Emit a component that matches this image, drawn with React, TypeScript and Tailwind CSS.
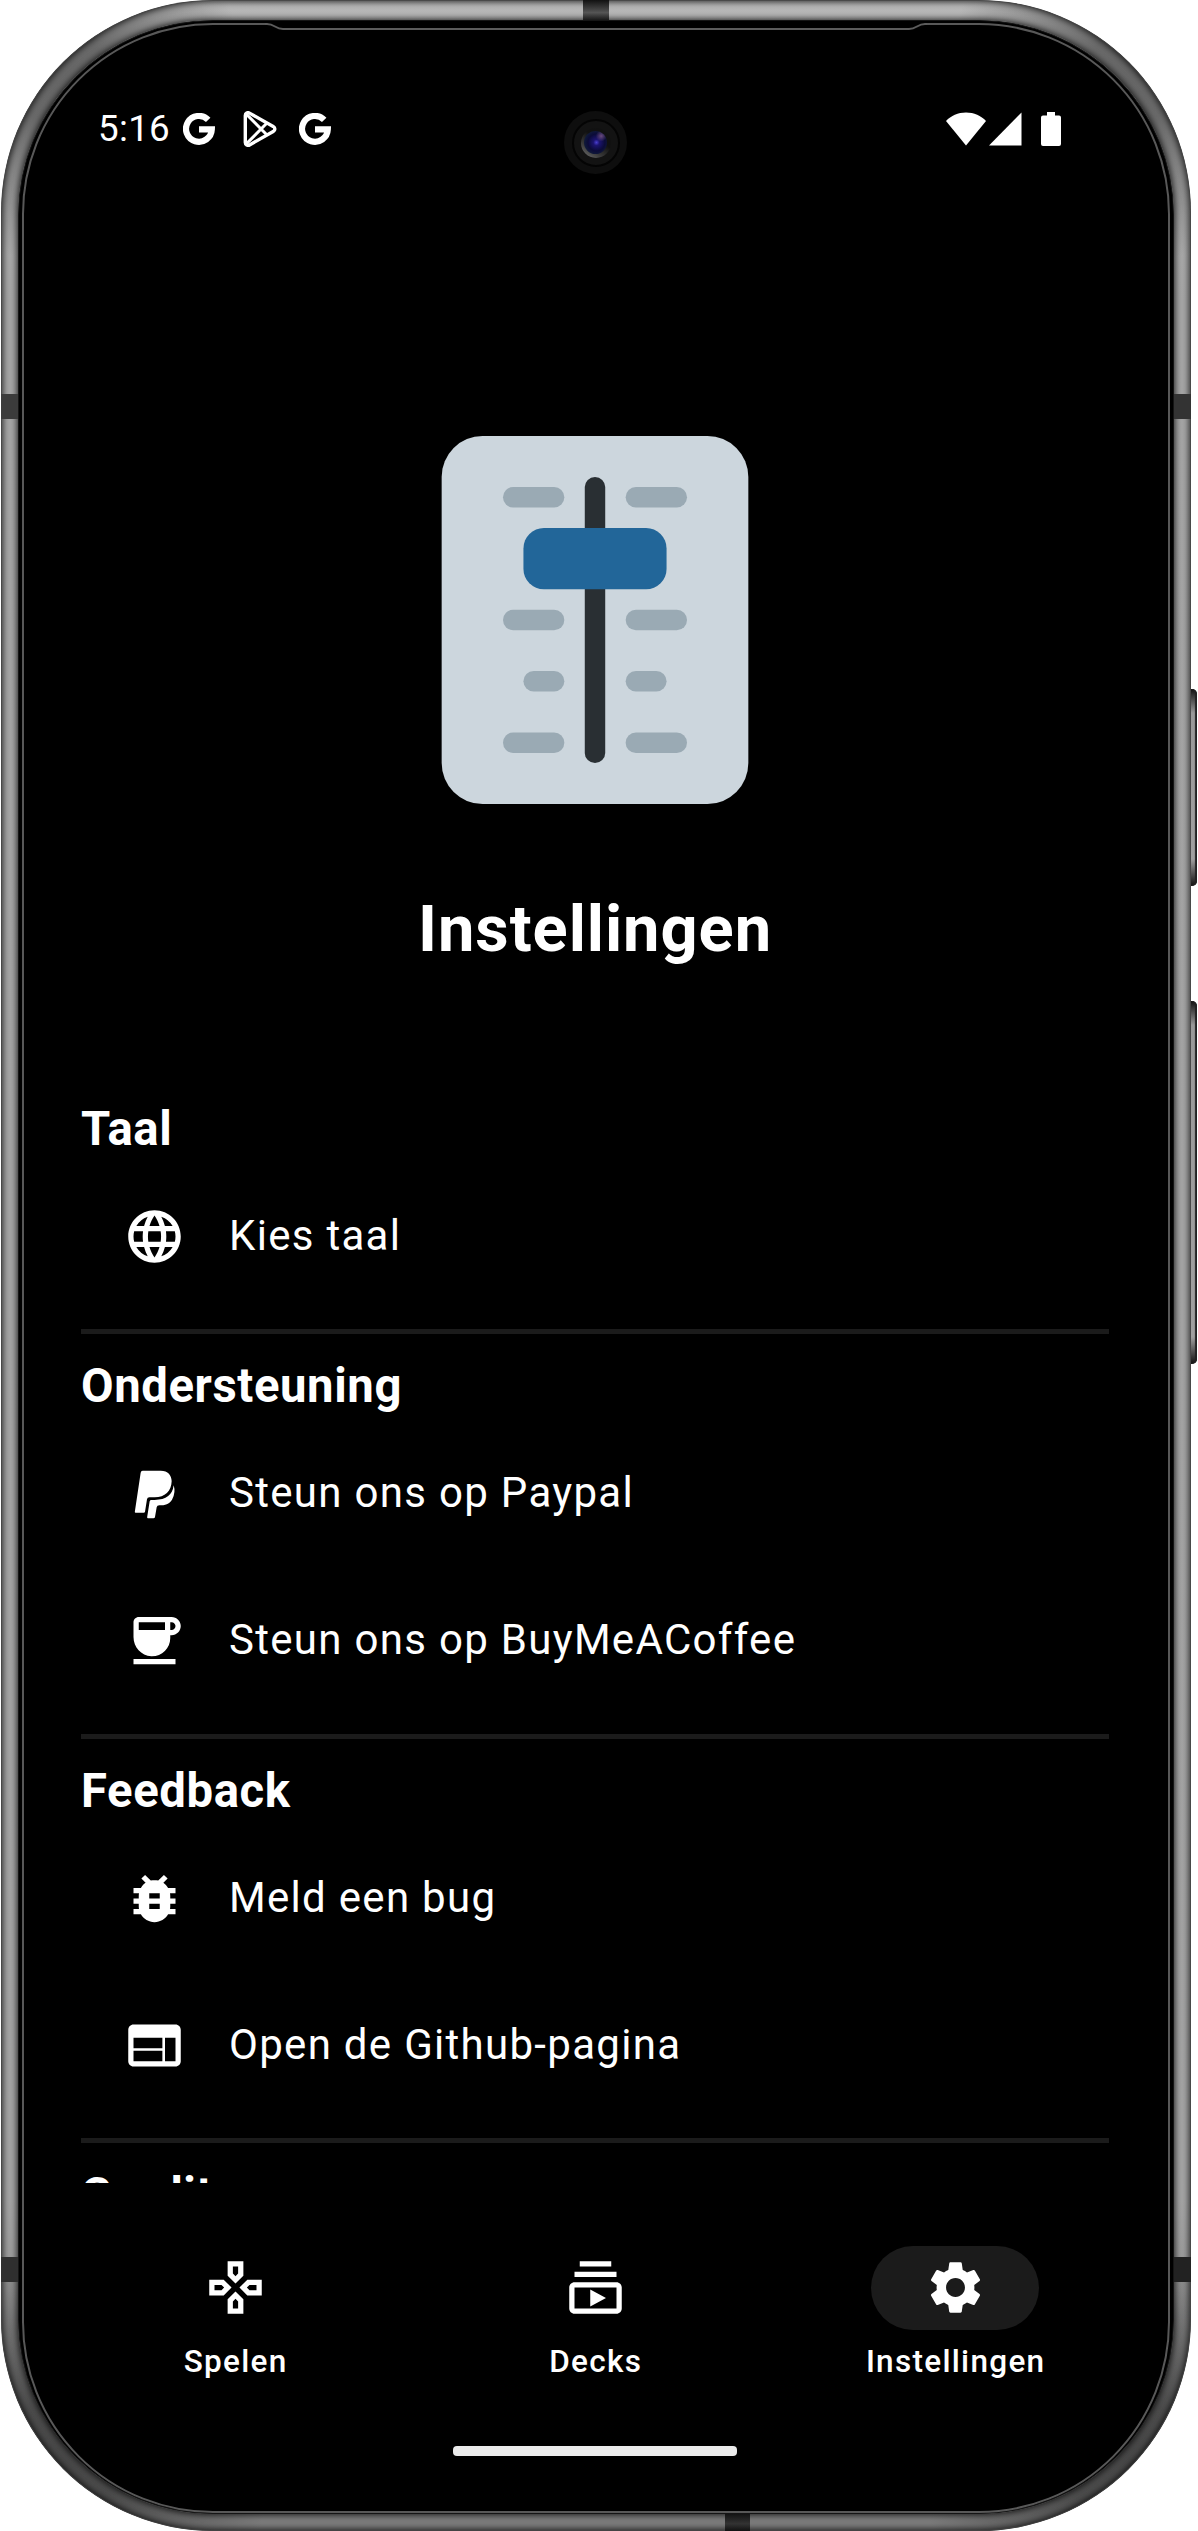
import type { ReactNode } from "react";
import type { IconType } from "react-icons";
import {
  MdBugReport,
  MdCoffee,
  MdLanguage,
  MdOutlineGamepad,
  MdOutlineSubscriptions,
  MdSettings,
  MdWeb,
} from "react-icons/md";

function Paypal({ className }: { className?: string }) {
  return (
    <svg viewBox="3 6 189 189" className={className} fill="currentColor">
      <path d="M62 32H116C138 32 149 46 149 64C148 94 129 112 98 112H82Q76 112 75 118L69 155Q68.500 158 65 158H41Q38 158 38.500 155L56 38Q57 32 62 32Z" />
      <path d="M155 76Q162 98 150 119C142 132 129 136 112 136Q105 136 104 142L99 171Q98.500 175 94 175H78Q75 175 75.500 171L83 124Q84 120 88 120H98Q150 119 155 76Z" />
    </svg>
  );
}

function GoogleG() {
  return (
    <svg viewBox="0 0 32 32" className="size-8" fill="none" stroke="white" strokeWidth="6.2">
      <path d="M25.2 6.9A12.9 12.9 0 1 0 28.8 16.4H16" />
    </svg>
  );
}

function PlayStore() {
  return (
    <svg viewBox="0 0 34 36" className="h-9 w-[34px]" fill="none" stroke="white" strokeWidth="3.4" strokeLinejoin="round">
      <path d="M2.3 4.4C2.3 2.2 4.6 1 6.5 2.1L30.2 15.4C32.4 16.7 32.4 19.3 30.2 20.6L6.500 33.900C4.6 35 2.3 33.8 2.3 31.6Z" />
      <path d="M3.6 3.4L24 24M3.6 32.6L24 12" strokeWidth="3" />
    </svg>
  );
}

function StatusBar() {
  return (
    <div className="flex h-[36px] items-center pl-[43px] pr-[74px]">
      <span className="w-[85px] text-[36.75px] leading-[36px] tracking-[0.3px]">5:16</span>
      <GoogleG />
      <span className="ml-7">
        <PlayStore />
      </span>
      <span className="ml-[22px]">
        <GoogleG />
      </span>
      <div className="ml-auto flex items-center gap-[3px]">
        <svg viewBox="0 0 40 34" className="h-[34px] w-10" fill="white">
          <path d="M20 33.5L0 9C5 4 12 .6 20 .6S35 4 40 9Z" />
        </svg>
        <svg viewBox="0 0 33 34" className="h-[34px] w-[33px]" fill="white">
          <path d="M0 33.5L32.5 .5V33.5Z" />
        </svg>
        <svg viewBox="0 0 20 34" className="ml-4 h-[34px] w-5" fill="white">
          <path d="M6 0H14V3.4H18Q20 3.4 20 5.4V32Q20 34 18 34H2Q0 34 0 32V5.4Q0 3.4 2 3.4H6Z" />
        </svg>
      </div>
    </div>
  );
}

function SliderArt() {
  const marks = [5, 17, 29];
  return (
    <svg viewBox="0 0 36 36" className="size-[368px]">
      <rect x="3" y="0" width="30" height="36" rx="4" fill="#CCD6DD" />
      <g fill="#9AAAB4">
        {marks.map((y) => (
          <g key={y}>
            <rect x="9" y={y} width="6" height="2" rx="1" />
            <rect x="21" y={y} width="6" height="2" rx="1" />
          </g>
        ))}
        <rect x="11" y="23" width="4" height="2" rx="1" />
        <rect x="21" y="23" width="4" height="2" rx="1" />
      </g>
      <rect x="17" y="4" width="2" height="28" rx="1" fill="#292F33" />
      <rect x="11" y="9" width="14" height="6" rx="2" fill="#226699" />
    </svg>
  );
}

type IconComponent = IconType | typeof Paypal;

function Row({ icon: Icon, label }: { icon: IconComponent; label: string }) {
  return (
    <div className="flex h-[147px] items-center pl-[42px]">
      <Icon className="size-[63px] shrink-0" />
      <span className="ml-[43px] pb-[2px] text-[42px] leading-[63px] tracking-[1.3px]">{label}</span>
    </div>
  );
}

function Section({ title, children }: { title: string; children?: ReactNode }) {
  return (
    <section className="border-b-[5px] border-[#1b1b1b] pb-[19.4px]">
      <h2 className="flex h-[86px] items-end pb-[6px] text-[47.25px] leading-[55px] font-bold tracking-[0.6px]">
        {title}
      </h2>
      {children}
    </section>
  );
}

function NavItem({ icon: Icon, label, active }: { icon: IconComponent; label: string; active?: boolean }) {
  return (
    <div className="flex w-[360px] flex-col items-center">
      <div
        className={`flex h-[84px] w-[168px] items-center justify-center rounded-full pb-px ${active ? "bg-[#1b1b1b]" : ""}`}
      >
        <Icon className="size-[63px]" />
      </div>
      <span className="mt-[11px] pl-[1.3px] text-[31.5px] leading-[42px] font-medium tracking-[1.3px]">{label}</span>
    </div>
  );
}

function Camera() {
  return (
    <div className="absolute top-[111px] left-[564px] flex size-[63px] items-center justify-center rounded-full bg-[#0e0e0e]">
      <div className="flex size-[48px] items-center justify-center rounded-full border-2 border-[#040404] bg-[#131313]">
        <div className="flex size-[30px] items-center justify-center rounded-full bg-[linear-gradient(35deg,#777_0%,#3a3a3a_30%,#111_60%)]">
          <div className="size-[23px] rounded-full bg-[radial-gradient(circle_at_75%_22%,#6a4a80_0,transparent_22%),radial-gradient(circle_at_54%_50%,#4a3fd0_0%,#1c1470_18%,#0b0b38_50%,#12203a_80%,#08060c_100%)]" />
        </div>
      </div>
    </div>
  );
}

function Frame({ children }: { children: ReactNode }) {
  return (
    <div className="relative h-[2531px] w-[1198px] overflow-hidden bg-white">
      {/* side buttons */}
      <div className="absolute top-[689px] left-[1188px] h-[197px] w-[9px] rounded-r-[5px] bg-[linear-gradient(#111,#999_24px,#a0a0a0_170px,#111)] shadow-[inset_-2px_0_1px_#222]" />
      <div className="absolute top-[1001px] left-[1188px] h-[363px] w-[9px] rounded-r-[5px] bg-[linear-gradient(#111,#999_24px,#a0a0a0_336px,#111)] shadow-[inset_-2px_0_1px_#222]" />
      {/* metal band */}
      <div className="absolute inset-y-0 left-[1px] w-[1190px] overflow-hidden rounded-[212px] bg-[radial-gradient(circle_at_50px_70px,#666_0,#6a6a6a_50px,transparent_190px),radial-gradient(circle_at_1140px_70px,#666_0,#6a6a6a_50px,transparent_190px),radial-gradient(circle_at_60px_2461px,#484848_0,#4c4c4c_60px,transparent_210px),radial-gradient(circle_at_1130px_2461px,#484848_0,#4c4c4c_60px,transparent_210px),linear-gradient(#b8b8b8_0,#b4b4b4_30px,#a6a6a6_300px,#a4a4a4_2200px,#7c7c7c_2480px)]">
        <div className="absolute inset-0 rounded-[212px] shadow-[inset_0_0_0_1px_rgba(70,70,70,0.8),inset_0_0_6px_2px_rgba(0,0,0,0.75)]" />
        <div className="absolute top-[20px] right-[17px] bottom-[17px] left-[17px] rounded-[195px] shadow-[0_0_6px_1px_rgba(0,0,0,0.8)]" />
        <div className="absolute top-[394px] left-0 h-[25px] w-5 bg-[#3b3b3b]" />
        <div className="absolute top-[394px] right-0 h-[25px] w-5 bg-[#333]" />
        <div className="absolute top-[2257px] left-0 h-[25px] w-5 bg-[#2f2f2f]" />
        <div className="absolute top-[2257px] right-0 h-[25px] w-5 bg-[#222]" />
        <div className="absolute top-0 left-[582px] h-[21px] w-[26px] bg-[linear-gradient(#111,#555_60%,#111)]" />
        <div className="absolute bottom-0 left-[724px] h-[18px] w-[25px] bg-[linear-gradient(#111,#333_60%,#111)]" />
        <div className="absolute top-[20px] right-[17px] bottom-[17px] left-[17px] rounded-[195px] border border-[#151515] bg-black" />
        <div className="absolute top-[23px] right-[21px] bottom-[18px] left-[21px] rounded-[191px] border-2 border-[#585858] bg-black" />
        {/* earpiece slot */}
        <svg viewBox="0 0 662 8" className="absolute top-[22px] left-[264px] h-2 w-[662px]" fill="none">
          <path d="M0 0H662V6H0Z" fill="black" />
          <path d="M0 2H2C10 2 10 7 18 7H644C652 7 652 2 660 2H662" stroke="#5c5c5c" strokeWidth="2" />
        </svg>
      </div>
      {children}
      <Camera />
    </div>
  );
}

export default function App() {
  return (
    <div className="font-[Roboto,sans-serif] text-white">
      <Frame>
        <div className="relative ml-[55px] flex h-full w-[1080px] flex-col pt-[111px]">
          <StatusBar />
          <main className="h-[2036px] shrink-0 overflow-hidden px-[26px]">
            <div className="flex flex-col items-center pt-[289px]">
              <SliderArt />
              <h1 className="mt-[87px] text-[65px] leading-[77px] font-bold tracking-[0.95px]">Instellingen</h1>
            </div>
            <div className="mt-[109px]">
              <Section title="Taal">
                <Row icon={MdLanguage} label="Kies taal" />
              </Section>
              <Section title="Ondersteuning">
                <Row icon={Paypal} label="Steun ons op Paypal" />
                <Row icon={MdCoffee} label="Steun ons op BuyMeACoffee" />
              </Section>
              <Section title="Feedback">
                <Row icon={MdBugReport} label="Meld een bug" />
                <Row icon={MdWeb} label="Open de Github-pagina" />
              </Section>
              <Section title="Credits" />
            </div>
          </main>
          <nav className="mt-[63px] flex">
            <NavItem icon={MdOutlineGamepad} label="Spelen" />
            <NavItem icon={MdOutlineSubscriptions} label="Decks" />
            <NavItem icon={MdSettings} label="Instellingen" active />
          </nav>
          <div className="mx-auto mt-[63px] h-[10px] w-[284px] rounded-[4px] bg-[#ebebeb]" />
        </div>
      </Frame>
    </div>
  );
}
